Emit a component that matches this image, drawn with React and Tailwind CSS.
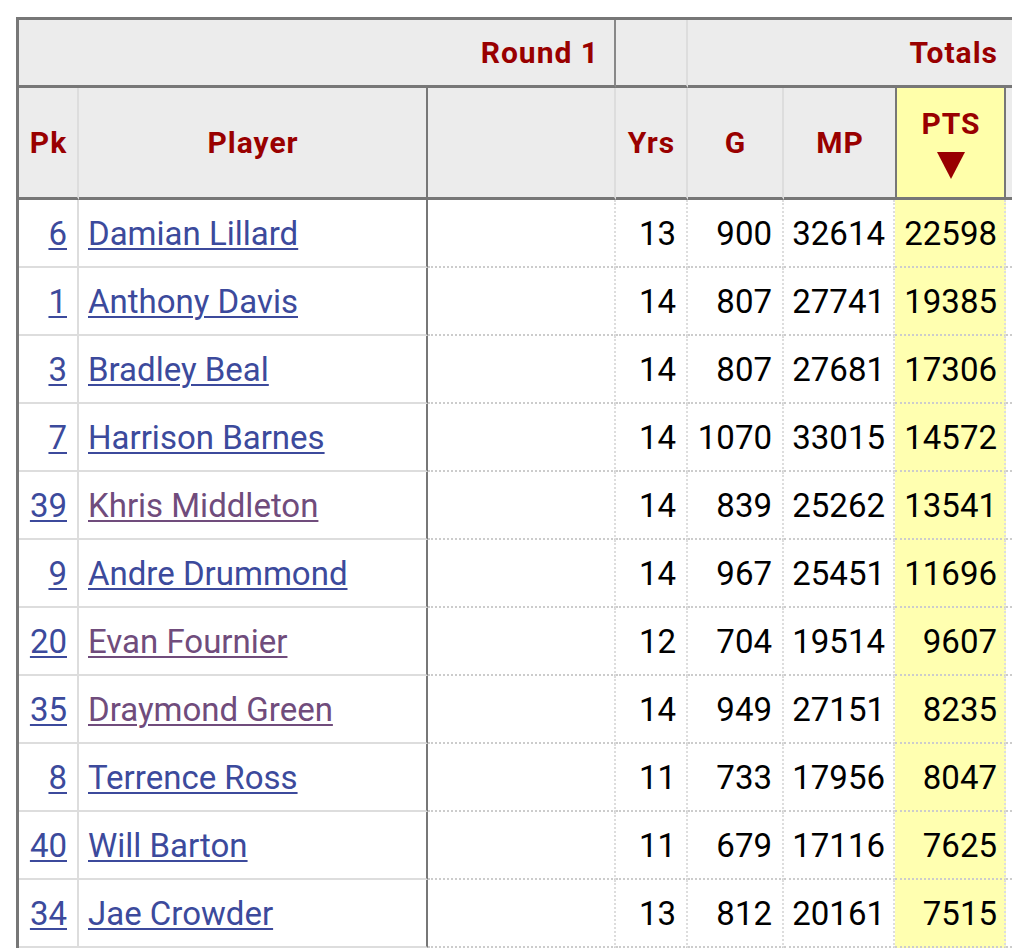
import React from "react";

const rows = [
  ["6", "Damian Lillard", false, "13", "900", "32614", "22598"],
  ["1", "Anthony Davis", false, "14", "807", "27741", "19385"],
  ["3", "Bradley Beal", false, "14", "807", "27681", "17306"],
  ["7", "Harrison Barnes", false, "14", "1070", "33015", "14572"],
  ["39", "Khris Middleton", true, "14", "839", "25262", "13541"],
  ["9", "Andre Drummond", false, "14", "967", "25451", "11696"],
  ["20", "Evan Fournier", true, "12", "704", "19514", "9607"],
  ["35", "Draymond Green", true, "14", "949", "27151", "8235"],
  ["8", "Terrence Ross", false, "11", "733", "17956", "8047"],
  ["40", "Will Barton", false, "11", "679", "17116", "7625"],
  ["34", "Jae Crowder", false, "13", "812", "20161", "7515"],
];

const th = "text-[30px] font-bold text-[#900] tracking-[1px]";
const td = "text-[33px] pt-[2px]";

export default function App() {
  return (
    <div className="w-[1012px] h-[950px] overflow-hidden bg-white" style={{ fontFamily: "Roboto, 'Liberation Sans', sans-serif" }}>
      <div className="ml-[16px] mt-[17px] w-[996px] border-l-[3px] border-t-[3px] border-[#777] grid grid-cols-[60px_349px_188px_72px_96px_111px_111px_6px]">
        {/* header row 1 */}
        <div className={"col-span-3 h-[68px] bg-[#ececec] border-r-2 border-r-[#888] border-b-[3px] border-b-[#777] flex items-center justify-end pr-[15px] " + th}>
          Round 1
        </div>
        <div className="h-[68px] bg-[#ececec] border-r-2 border-r-[#ddd] border-b-[3px] border-b-[#777]" />
        <div className={"col-span-4 h-[68px] bg-[#ececec] border-b-[3px] border-b-[#777] flex items-center justify-end pr-[14px] " + th}>
          Totals
        </div>

        {/* header row 2 */}
        <div className={"h-[112px] bg-[#ececec] border-r-2 border-r-[#ddd] border-b-[3px] border-b-[#777] flex items-center justify-center pl-[1px] " + th}>Pk</div>
        <div className={"h-[112px] bg-[#ececec] border-r-2 border-r-[#777] border-b-[3px] border-b-[#777] flex items-center justify-center pl-[1px] " + th}>Player</div>
        <div className="h-[112px] bg-[#ececec] border-r-2 border-r-[#ddd] border-b-[3px] border-b-[#777]" />
        <div className={"h-[112px] bg-[#ececec] border-r-2 border-r-[#ddd] border-b-[3px] border-b-[#777] flex items-center justify-center pl-[1px] " + th}>Yrs</div>
        <div className={"h-[112px] bg-[#ececec] border-r-2 border-r-[#ddd] border-b-[3px] border-b-[#777] flex items-center justify-center pl-[1px] " + th}>G</div>
        <div className={"h-[112px] bg-[#ececec] border-b-[3px] border-b-[#777] flex items-center justify-center pl-[1px] " + th}>MP</div>
        <div className={"h-[112px] bg-[#ffffaa] border-l-2 border-r-2 border-[#777] border-b-[3px] flex flex-col items-center justify-center leading-none " + th}>
          <span className="mt-[2px] pl-[1px]">PTS</span>
          <svg width="28" height="27" viewBox="0 0 28 27" className="mt-[13px]">
            <polygon points="0,0 28,0 14,27" fill="#900" />
          </svg>
        </div>
        <div className="h-[112px] bg-[#ececec] border-b-[3px] border-b-[#777]" />

        {/* data rows */}
        {rows.map(([pk, name, visited, yrs, g, mp, pts]) => (
          <React.Fragment key={name}>
            <div className={"h-[68px] border-r-2 border-r-[#ddd] border-b-2 border-b-[#ddd] flex items-center justify-end pr-[10px] " + td}>
              <a href="#" className="text-[#3c4a9c] underline decoration-2 underline-offset-[3px]">{pk}</a>
            </div>
            <div className={"h-[68px] border-r-2 border-r-[#777] border-b-2 border-b-[#ddd] flex items-center pl-[9px] " + td}>
              <a href="#" className={(visited ? "text-[#704c7c]" : "text-[#3c4a9c]") + " underline decoration-2 underline-offset-[3px] whitespace-nowrap"}>{name}</a>
            </div>
            <div className="h-[68px] border-r-2 border-r-[#ddd] border-b-2 border-dotted border-b-[#ccc]" />
            <div className={"h-[68px] border-r-2 border-r-[#ddd] border-b-2 border-dotted border-b-[#ccc] flex items-center justify-end pr-[10px] text-black " + td}>{yrs}</div>
            <div className={"h-[68px] border-r-2 border-r-[#ddd] border-b-2 border-dotted border-b-[#ccc] flex items-center justify-end pr-[10px] text-black " + td}>{g}</div>
            <div className={"h-[68px] border-r-2 border-r-[#ddd] border-b-2 border-dotted border-b-[#ccc] flex items-center justify-end pr-[8px] text-black " + td}>{mp}</div>
            <div className={"h-[68px] bg-[#ffffb0] border-r-2 border-r-[#ddd] border-b-2 border-dotted border-b-[#ccc] flex items-center justify-end pr-[7px] text-black " + td}>{pts}</div>
            <div className="h-[68px] border-b-2 border-dotted border-b-[#ccc]" />
          </React.Fragment>
        ))}
      </div>
    </div>
  );
}
